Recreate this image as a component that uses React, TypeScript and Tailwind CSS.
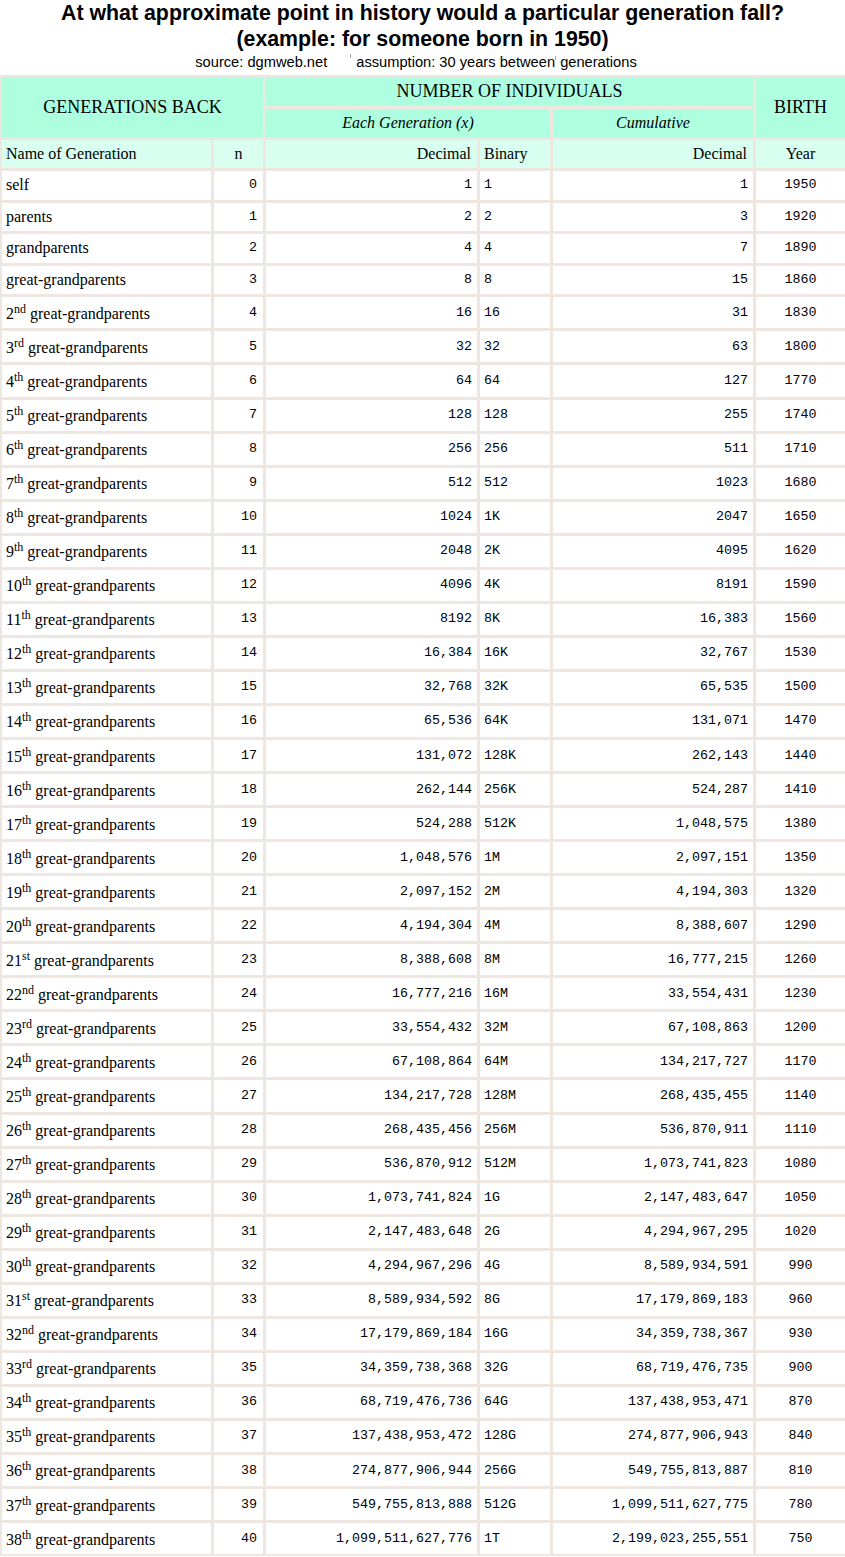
import React from "react";

const SERIF = "font-['Liberation_Serif','Times_New_Roman',serif]";
const MONO = "font-['Liberation_Mono','Courier_New',monospace] text-[13.33px]";

function fmt(n: number): string {
  const s = String(n);
  if (n < 10000) return s;
  return s.replace(/\B(?=(\d{3})+(?!\d))/g, ",");
}

function binary(n: number): string {
  const units = ["", "K", "M", "G", "T"];
  const u = Math.floor(n / 10);
  const v = Math.pow(2, n % 10);
  return `${v}${units[u]}`;
}

function ordinal(k: number): string {
  const m100 = k % 100;
  if (m100 >= 11 && m100 <= 13) return "th";
  const m10 = k % 10;
  if (m10 === 1) return "st";
  if (m10 === 2) return "nd";
  if (m10 === 3) return "rd";
  return "th";
}

function Name({ n }: { n: number }) {
  if (n === 0) return <>self</>;
  if (n === 1) return <>parents</>;
  if (n === 2) return <>grandparents</>;
  if (n === 3) return <>great-grandparents</>;
  const k = n - 2;
  return (
    <>
      {k}
      <sup className="text-[12px]">{ordinal(k)}</sup> great-grandparents
    </>
  );
}

const rows = Array.from({ length: 41 }, (_, n) => n);

export default function App() {
  return (
    <div className="w-[845px] bg-white text-black">
      <div className="font-['Liberation_Sans',Arial,sans-serif] text-center">
        <div className="text-[21.33px] font-bold leading-[26px]">
          At what approximate point in history would a particular generation fall?
          <br />
          (example: for someone born in 1950)
        </div>
        <div className="text-[14.67px] leading-[17px] pr-[13px] pt-[2px]">
          source: dgmweb.net
          <span className="inline-block w-[29px] h-[10px] relative align-baseline">
            <span className="absolute right-[5px] top-[-3px] w-px h-[4px] bg-gray-400" />
          </span>
          assumption: 30 years between
          <span className="inline-block w-px h-[4px] bg-gray-400 align-top mt-[2px]" />
          {" "}generations
        </div>
      </div>

      <div className="mt-[4px] bg-[#eee6e0] pl-[2px] pt-[2px] pb-[2px] overflow-hidden">
        <div className={`grid grid-cols-[209px_49px_211px_70px_200px_89px] gap-[3px] ${SERIF}`}>
          <div className="col-start-1 col-span-2 row-start-1 row-span-2 bg-[#aeffe0] flex items-center justify-center text-[18px]">
            GENERATIONS BACK
          </div>
          <div className="col-start-3 col-span-3 row-start-1 h-[29px] bg-[#aeffe0] flex items-center justify-center text-[18px]">
            NUMBER OF INDIVIDUALS
          </div>
          <div className="col-start-6 row-start-1 row-span-2 bg-[#aeffe0] flex items-center justify-center text-[18px]">
            BIRTH
          </div>
          <div className="col-start-3 col-span-2 row-start-2 h-[28px] bg-[#aeffe0] flex items-center justify-center text-[16px] italic">
            Each Generation (x)
          </div>
          <div className="col-start-5 row-start-2 h-[28px] bg-[#aeffe0] flex items-center justify-center text-[16px] italic">
            Cumulative
          </div>

          <div className="h-[28px] bg-[#d8fff0] flex items-center pl-[4px] text-[16px]">Name of Generation</div>
          <div className="h-[28px] bg-[#d8fff0] flex items-center justify-center text-[16px]">n</div>
          <div className="h-[28px] bg-[#d8fff0] flex items-center justify-end pr-[6px] text-[16px]">Decimal</div>
          <div className="h-[28px] bg-[#d8fff0] flex items-center pl-[4px] text-[16px]">Binary</div>
          <div className="h-[28px] bg-[#d8fff0] flex items-center justify-end pr-[6px] text-[16px]">Decimal</div>
          <div className="h-[28px] bg-[#d8fff0] flex items-center justify-center text-[16px]">Year</div>

          {rows.map((n) => {
            const h = n >= 4 ? "h-[31.06px]" : "h-[28.6px]";
            const each = Math.pow(2, n);
            const cum = Math.pow(2, n + 1) - 1;
            return (
              <React.Fragment key={n}>
                <div className={`${h} bg-white flex items-center pl-[4px] text-[16px] whitespace-nowrap ${n >= 4 ? "pt-[2px]" : ""}`}>
                  <span>
                    <Name n={n} />
                  </span>
                </div>
                <div className={`${h} bg-white flex items-center justify-end pr-[6px] ${MONO}`}>{n}</div>
                <div className={`${h} bg-white flex items-center justify-end pr-[5px] ${MONO}`}>{fmt(each)}</div>
                <div className={`${h} bg-white flex items-center pl-[4px] ${MONO}`}>{binary(n)}</div>
                <div className={`${h} bg-white flex items-center justify-end pr-[5px] ${MONO}`}>{fmt(cum)}</div>
                <div className={`${h} bg-white flex items-center justify-center ${MONO}`}>{1950 - 30 * n}</div>
              </React.Fragment>
            );
          })}
        </div>
      </div>
    </div>
  );
}
